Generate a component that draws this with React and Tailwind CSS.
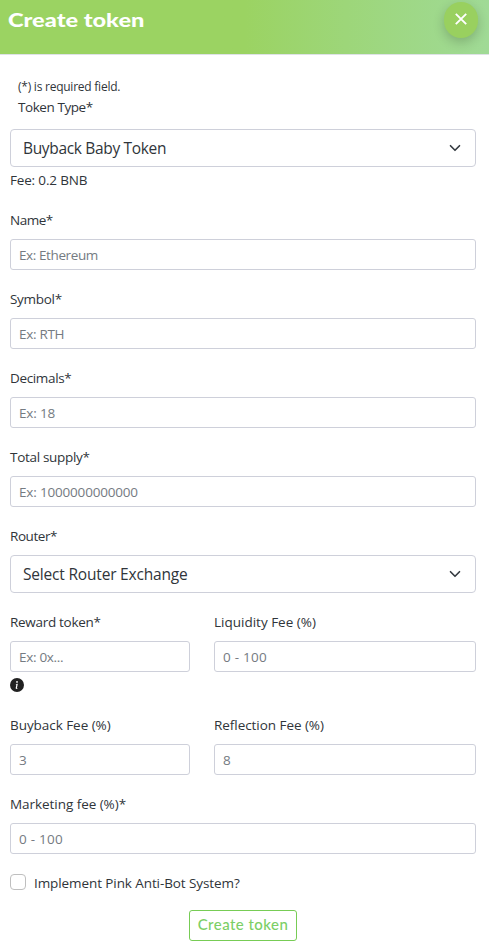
import React from "react";

function Label({ children, className = "" }) {
  return (
    <label className={`mb-2 block h-[21px] whitespace-nowrap text-[13.5px] leading-[21px] text-[#30353a] ${className}`}>
      {children}
    </label>
  );
}

function Input({ placeholder, className = "" }) {
  return (
    <input
      type="text"
      placeholder={placeholder}
      className={`block h-[31px] w-full rounded-[3px] border border-[#ced0da] bg-white px-2 pt-px text-[13.5px] text-[#212529] outline-none placeholder:text-[#757b82] ${className}`}
    />
  );
}

function Select({ value, className = "" }) {
  return (
    <button
      type="button"
      className="flex h-[38px] w-full items-center justify-between rounded border border-[#ced0da] bg-white px-3 text-left text-[15.5px] text-[#30353a]"
    >
      <span className={`pt-0.5 ${className}`}>{value}</span>
      <svg width="16" height="12" viewBox="0 0 16 16" fill="none" stroke="#343a40" strokeWidth="2.2" strokeLinecap="round" strokeLinejoin="round">
        <path d="M2 5l6 6 6-6" />
      </svg>
    </button>
  );
}

function Field({ label, placeholder, labelClass, inputClass }) {
  return (
    <div>
      <Label className={labelClass}>{label}</Label>
      <Input placeholder={placeholder} className={inputClass} />
    </div>
  );
}

export default function App() {
  return (
    <div className="h-[952px] w-full overflow-hidden bg-white font-['Open_Sans','Noto_Sans',sans-serif] text-[#30353a]">
      <header className="flex h-[55px] items-start justify-between border-b border-[#dee2e6] bg-linear-to-r from-[#9bd362] from-50% to-[#a0da96] pt-0.5 pr-[11px] pl-2">
        <h5 className="mt-1.5 origin-left scale-x-[1.31] font-['Lato',sans-serif] text-[18px] leading-6 font-black whitespace-nowrap text-white">
          Create token
        </h5>
        <button
          type="button"
          aria-label="Close"
          className="flex h-9 w-[34px] items-center justify-center rounded-full bg-[#99d05f] shadow-[0_4px_12px_rgba(0,0,0,0.2)]"
        >
          <svg width="12" height="12" viewBox="0 0 12 12" stroke="white" strokeWidth="1.9" className="mb-0.5">
            <path d="M.8.8l10.4 10.4M11.2.8L.8 11.2" />
          </svg>
        </button>
      </header>

      <main className="pt-[22px] pr-[13px] pl-2.5">
        <p className="ml-2 h-5 text-[12px] leading-[20px] tracking-[-0.24px]">(*) is required field.</p>
        <Label className="mb-[11px] ml-2 tracking-[-0.43px]">Token Type*</Label>
        <Select value="Buyback Baby Token" className="tracking-[-0.33px]" />
        <p className="mt-[3px] mb-[19px] h-[21px] text-[13.5px] leading-[21px] tracking-[-0.17px]">Fee: 0.2 BNB</p>

        <div className="flex flex-col gap-[19px]">
          <Field label="Name*" placeholder="Ex: Ethereum" labelClass="tracking-[-0.5px]" inputClass="tracking-[-0.4px]" />
          <Field label="Symbol*" placeholder="Ex: RTH" labelClass="tracking-[-0.3px]" inputClass="tracking-[-0.3px]" />
          <Field label="Decimals*" placeholder="Ex: 18" labelClass="tracking-[-0.35px]" inputClass="tracking-[-0.15px]" />
          <Field label="Total supply*" placeholder="Ex: 1000000000000" labelClass="tracking-[-0.3px]" inputClass="tracking-[-0.18px]" />
          <div>
            <Label className="tracking-[-0.45px]">Router*</Label>
            <Select value="Select Router Exchange" className="tracking-[-0.19px]" />
          </div>
          <div className="grid grid-cols-[180px_262px] gap-x-6">
            <div>
              <Field label="Reward token*" placeholder="Ex: 0x..." labelClass="tracking-[-0.3px]" inputClass="tracking-[-0.3px]" />
              <div className="h-6 pt-1.5">
                <svg width="14" height="14" viewBox="0 0 16 16" fill="#212121">
                  <path d="M8 16A8 8 0 1 0 8 0a8 8 0 0 0 0 16zm.93-9.412-1 4.705c-.07.34.029.533.304.533.194 0 .487-.07.686-.246l-.088.416c-.287.346-.92.598-1.465.598-.703 0-1.002-.422-.808-1.319l.738-3.468c.064-.293.006-.399-.287-.47l-.451-.081.082-.381 2.29-.287zM8 5.5a1 1 0 1 1 0-2 1 1 0 0 1 0 2z" fillRule="evenodd" />
                </svg>
              </div>
            </div>
            <Field label="Liquidity Fee (%)" placeholder="0 - 100" inputClass="tracking-[0.25px]" />
          </div>
          <div className="grid grid-cols-[180px_262px] gap-x-6">
            <Field label="Buyback Fee (%)" placeholder="3" labelClass="tracking-[-0.05px]" />
            <Field label="Reflection Fee (%)" placeholder="8" labelClass="tracking-[-0.05px]" />
          </div>
          <Field label="Marketing fee (%)*" placeholder="0 - 100" labelClass="tracking-[-0.05px]" inputClass="tracking-[0.25px]" />
        </div>

        <div className="mt-5 flex h-4 items-center gap-2">
          <input type="checkbox" className="size-4 shrink-0 appearance-none rounded border border-[#bfbfbf] bg-white" />
          <span className="pt-0.5 text-[13.5px] tracking-[-0.09px] whitespace-nowrap">Implement Pink Anti-Bot System?</span>
        </div>
        <div className="mt-5 flex justify-center">
          <button
            type="button"
            className="flex h-[31px] w-[108px] items-center justify-center rounded-[3px] border border-[#77cc55] bg-white pb-0.5 font-['Lato',sans-serif] text-[15px] font-medium tracking-[0.45px] whitespace-nowrap text-[#7ccf66]"
          >
            Create token
          </button>
        </div>
      </main>
    </div>
  );
}
